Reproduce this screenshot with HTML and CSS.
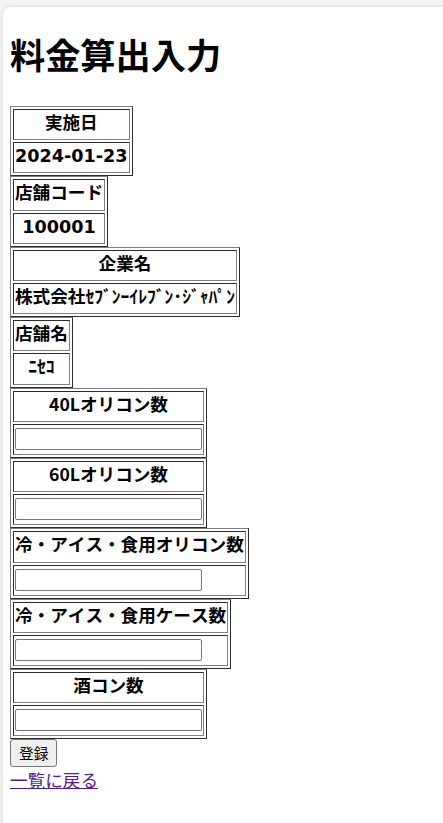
FILE: index.html
```html
<!DOCTYPE html>
<html lang="ja">
<head>
<meta charset="utf-8">
<title>料金算出入力</title>
<link rel="stylesheet" href="styles.css">
</head>
<body>
<div class="card">
  <h1 class="title">料金算出入力</h1>
  <form class="form">
    <table class="field"><tr><th>実施日</th></tr><tr><td class="value">2024-01-23</td></tr></table>
    <table class="field"><tr><th>店舗コード</th></tr><tr><td class="value">100001</td></tr></table>
    <table class="field"><tr><th>企業名</th></tr><tr><td class="value">株式会社ｾﾌﾞﾝｰｲﾚﾌﾞﾝ･ｼﾞｬﾊﾟﾝ</td></tr></table>
    <table class="field"><tr><th>店舗名</th></tr><tr><td class="value">ﾆｾｺ</td></tr></table>
    <table class="field"><tr><th>40Lオリコン数</th></tr><tr><td class="input-cell"><input class="num" type="text"></td></tr></table>
    <table class="field"><tr><th>60Lオリコン数</th></tr><tr><td class="input-cell"><input class="num" type="text"></td></tr></table>
    <table class="field"><tr><th>冷・アイス・食用オリコン数</th></tr><tr><td class="input-cell"><input class="num" type="text"></td></tr></table>
    <table class="field"><tr><th>冷・アイス・食用ケース数</th></tr><tr><td class="input-cell"><input class="num" type="text"></td></tr></table>
    <table class="field"><tr><th>酒コン数</th></tr><tr><td class="input-cell"><input class="num" type="text"></td></tr></table>
    <button class="submit" type="button">登録</button>
  </form>
  <div class="back-row"><a class="back" href="#">一覧に戻る</a></div>
</div>
</body>
</html>
```

FILE: styles.css
```css
html, body {
  overflow-x: hidden;
}
body {
  margin: 0;
  background: #f4f4f4;
  font-family: "Noto Sans CJK JP", sans-serif;
  color: #000;
}
.card {
  box-sizing: border-box;
  margin: 7px -20px 0 3px;
  padding: 1px 7px 30px;
  min-height: calc(100vh - 7px);
  background: #fff;
  border-radius: 8px 8px 0 0;
  box-shadow: 0 0 5px rgba(0, 0, 0, 0.12);
}
.title {
  margin: 20px 0 27px;
  font-family: "Noto Sans CJK JP", sans-serif;
  font-size: 35.2px;
  line-height: 51px;
  font-weight: bold;
}
.form {
  margin: 0;
}
.field {
  border: 1px outset #808080;
  border-spacing: 2px;
  font-size: 17.6px;
  font-kerning: none;
}
.field th,
.field td {
  border: 1px inset #808080;
  text-align: center;
  font-weight: bold;
  white-space: nowrap;
}
.field th {
  padding: 0 1px 5.2px;
  font-family: "Noto Sans CJK JP", sans-serif;
  line-height: 24px;
}
.field td {
  padding: 0 1px 2px;
  font-family: "DejaVu Sans", "Noto Sans CJK JP", sans-serif;
  line-height: 27.2px;
}
.num {
  display: block;
  box-sizing: border-box;
  width: 187px;
  height: 22px;
  margin: 3.2px 0 2px;
  padding: 0 2px;
  border: 1px solid #767676;
  border-radius: 2px;
  background: #fff;
}
.submit {
  display: block;
  margin: 0;
  padding: 2px 8px;
  font-family: "Noto Sans CJK JP", sans-serif;
  font-size: 14.67px;
  line-height: 22px;
  color: #000;
  background: #efefef;
  border: 1px solid #767676;
  border-radius: 3px;
}
.back-row {
  font-size: 17.6px;
  line-height: 25.5px;
}
.back {
  color: #551a8b;
  text-decoration: underline;
}
```
